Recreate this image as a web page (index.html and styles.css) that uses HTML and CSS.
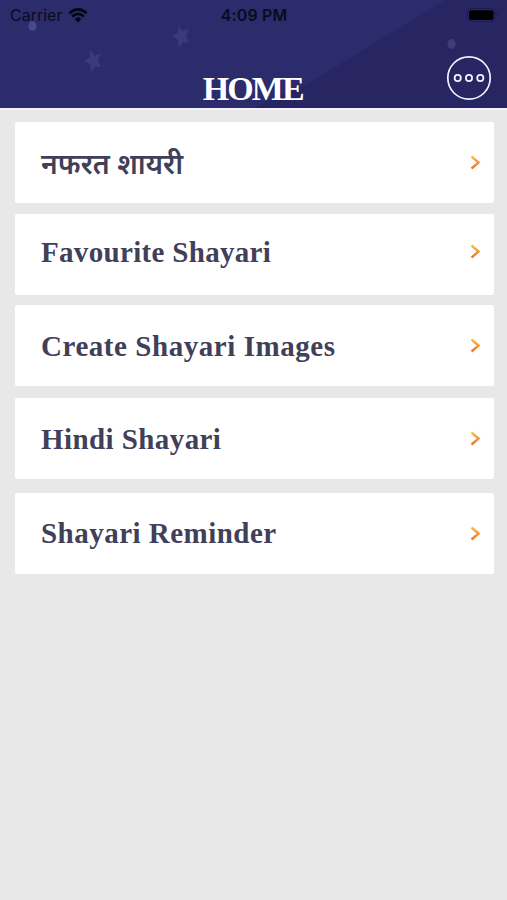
FILE: index.html
```html
<!DOCTYPE html>
<html lang="en">
<head>
<meta charset="utf-8">
<title>Home</title>
<link rel="stylesheet" href="styles.css">
</head>
<body>
<header class="header">
  <svg class="pattern" viewBox="0 0 507 108" aria-hidden="true">
    <path d="M445 0H507V108H253L311 82Z" fill="#272562"/>
    <g fill="#3c3a7b">
      <path id="star" d="M178 25L182 31L189 29L186 36L189 43L183 42L179 48L178 40L172 36L178 33Z"/>
      <use href="#star" x="-88" y="24.500"/>
      <ellipse cx="32.500" cy="26" rx="4" ry="5" fill="#49488a"/>
      <ellipse cx="451.500" cy="44" rx="4" ry="5" fill="#403e79"/>
    </g>
  </svg>
  <div class="status">
    <div class="network">
      <span class="carrier">Carrier</span>
      <svg class="wifi" viewBox="0 0 20 15" aria-hidden="true">
        <path d="M1.300 5.300Q10-2.500 18.700 5.300M4.200 8.400Q10 3.400 15.800 8.400" fill="none" stroke="#050510" stroke-width="2.600"/>
        <path d="M6.600 10.800Q10 7.800 13.400 10.800L10 14.400Z" fill="#050510"/>
      </svg>
    </div>
    <span class="time">4:09 PM</span>
    <svg class="battery" viewBox="0 0 32 14" aria-hidden="true">
      <rect x=".5" y=".5" width="27.500" height="13" rx="4" fill="none" stroke="#1d1b52"/>
      <rect x="2" y="2.300" width="24.500" height="9.800" rx="2.500" fill="#000"/>
      <path d="M30 5Q32 7 30 9Z" fill="#1d1b52"/>
    </svg>
  </div>
  <div class="titlebar">
    <h1 class="title">HOME</h1>
    <svg class="more" viewBox="0 0 46 46" aria-label="More">
      <g fill="none" stroke="#f3f2ff">
        <circle cx="23" cy="23" r="21.200" stroke-width="1.700"/>
        <g stroke-width="1.800"><circle cx="11.700" cy="23" r="3.100"/><circle cx="23" cy="23" r="3.100"/><circle cx="34.300" cy="23" r="3.100"/></g>
      </g>
    </svg>
  </div>
</header>
<svg class="defs" width="0" height="0" aria-hidden="true">
  <linearGradient id="orange" gradientUnits="userSpaceOnUse" x1="0" y1="1" x2="0" y2="14"><stop stop-color="#f9bd48"/><stop offset="1" stop-color="#ee702c"/></linearGradient>
  <symbol id="chevron" viewBox="0 0 11 15"><path d="M1.500 1.500L8.600 7.500L1.500 13.500" fill="none" stroke="url(#orange)" stroke-width="2.300"/></symbol>
</svg>
<main class="menu">
  <div class="card first"><span class="label hindi">नफरत शायरी</span><svg class="chevron"><use href="#chevron"/></svg></div>
  <div class="card favourite"><span class="label fav">Favourite Shayari</span><svg class="chevron"><use href="#chevron"/></svg></div>
  <div class="card create"><span class="label images">Create Shayari Images</span><svg class="chevron"><use href="#chevron"/></svg></div>
  <div class="card"><span class="label hs">Hindi Shayari</span><svg class="chevron"><use href="#chevron"/></svg></div>
  <div class="card"><span class="label reminder">Shayari Reminder</span><svg class="chevron"><use href="#chevron"/></svg></div>
</main>
</body>
</html>
```
FILE: styles.css
```css
* { box-sizing: border-box; }
body { margin: 0; min-height: 900px; background: #e8e8e8; font-family: "Liberation Serif", serif; }
.header { position: relative; height: 110px; background: #2c2b6c; border-bottom: 2px solid #f2f2f8; }
.pattern { position: absolute; inset: 0; width: 507px; height: 108px; }
.status { position: relative; display: grid; grid-template-columns: 1fr auto 1fr; height: 30px; padding: 0 8px 0 10px; align-items: center; font: 16px/30px Inter, sans-serif; color: #0b0a20; }
.network { display: flex; align-items: center; gap: 6px; }
.wifi { width: 20px; height: 15px; }
.time { margin-left: -1px; font-weight: 600; letter-spacing: .15px; }
.battery { width: 32px; height: 14px; justify-self: end; }
.titlebar { position: relative; display: grid; grid-template-columns: 1fr auto 1fr; height: 78px; padding: 25px 15.500px 0 16px; }
.title { grid-column: 2; margin: 12px 2px 0 0; font-size: 34px; line-height: 44px; letter-spacing: -1.900px; color: #fff; }
.more { width: 46px; height: 46px; justify-self: end; }
.defs { position: absolute; }
.menu { display: flex; flex-direction: column; gap: 11px; padding: 12px 13.500px 0 14.500px; }
.card { display: flex; justify-content: space-between; align-items: center; height: 81px; padding: 0 13px 0 26.500px; background: #fff; border-radius: 2px; }
.first { padding-bottom: 0; }
.favourite { margin-bottom: -1px; padding-bottom: 6px; }
.create { margin-bottom: 1.400px; }
.card:last-child { margin-top: 2.200px; }
.label { font-size: 29px; line-height: 40px; font-weight: 700; color: #414059; white-space: nowrap; }
.chevron { width: 11px; height: 15px; }
.hindi { font-family: "Noto Sans", "Noto Sans Devanagari", sans-serif; font-size: 28.300px; font-weight: 600; }
.fav { letter-spacing: .32px; }
.images { letter-spacing: .55px; }
.hs { letter-spacing: .42px; }
.reminder { letter-spacing: .48px; }
```
